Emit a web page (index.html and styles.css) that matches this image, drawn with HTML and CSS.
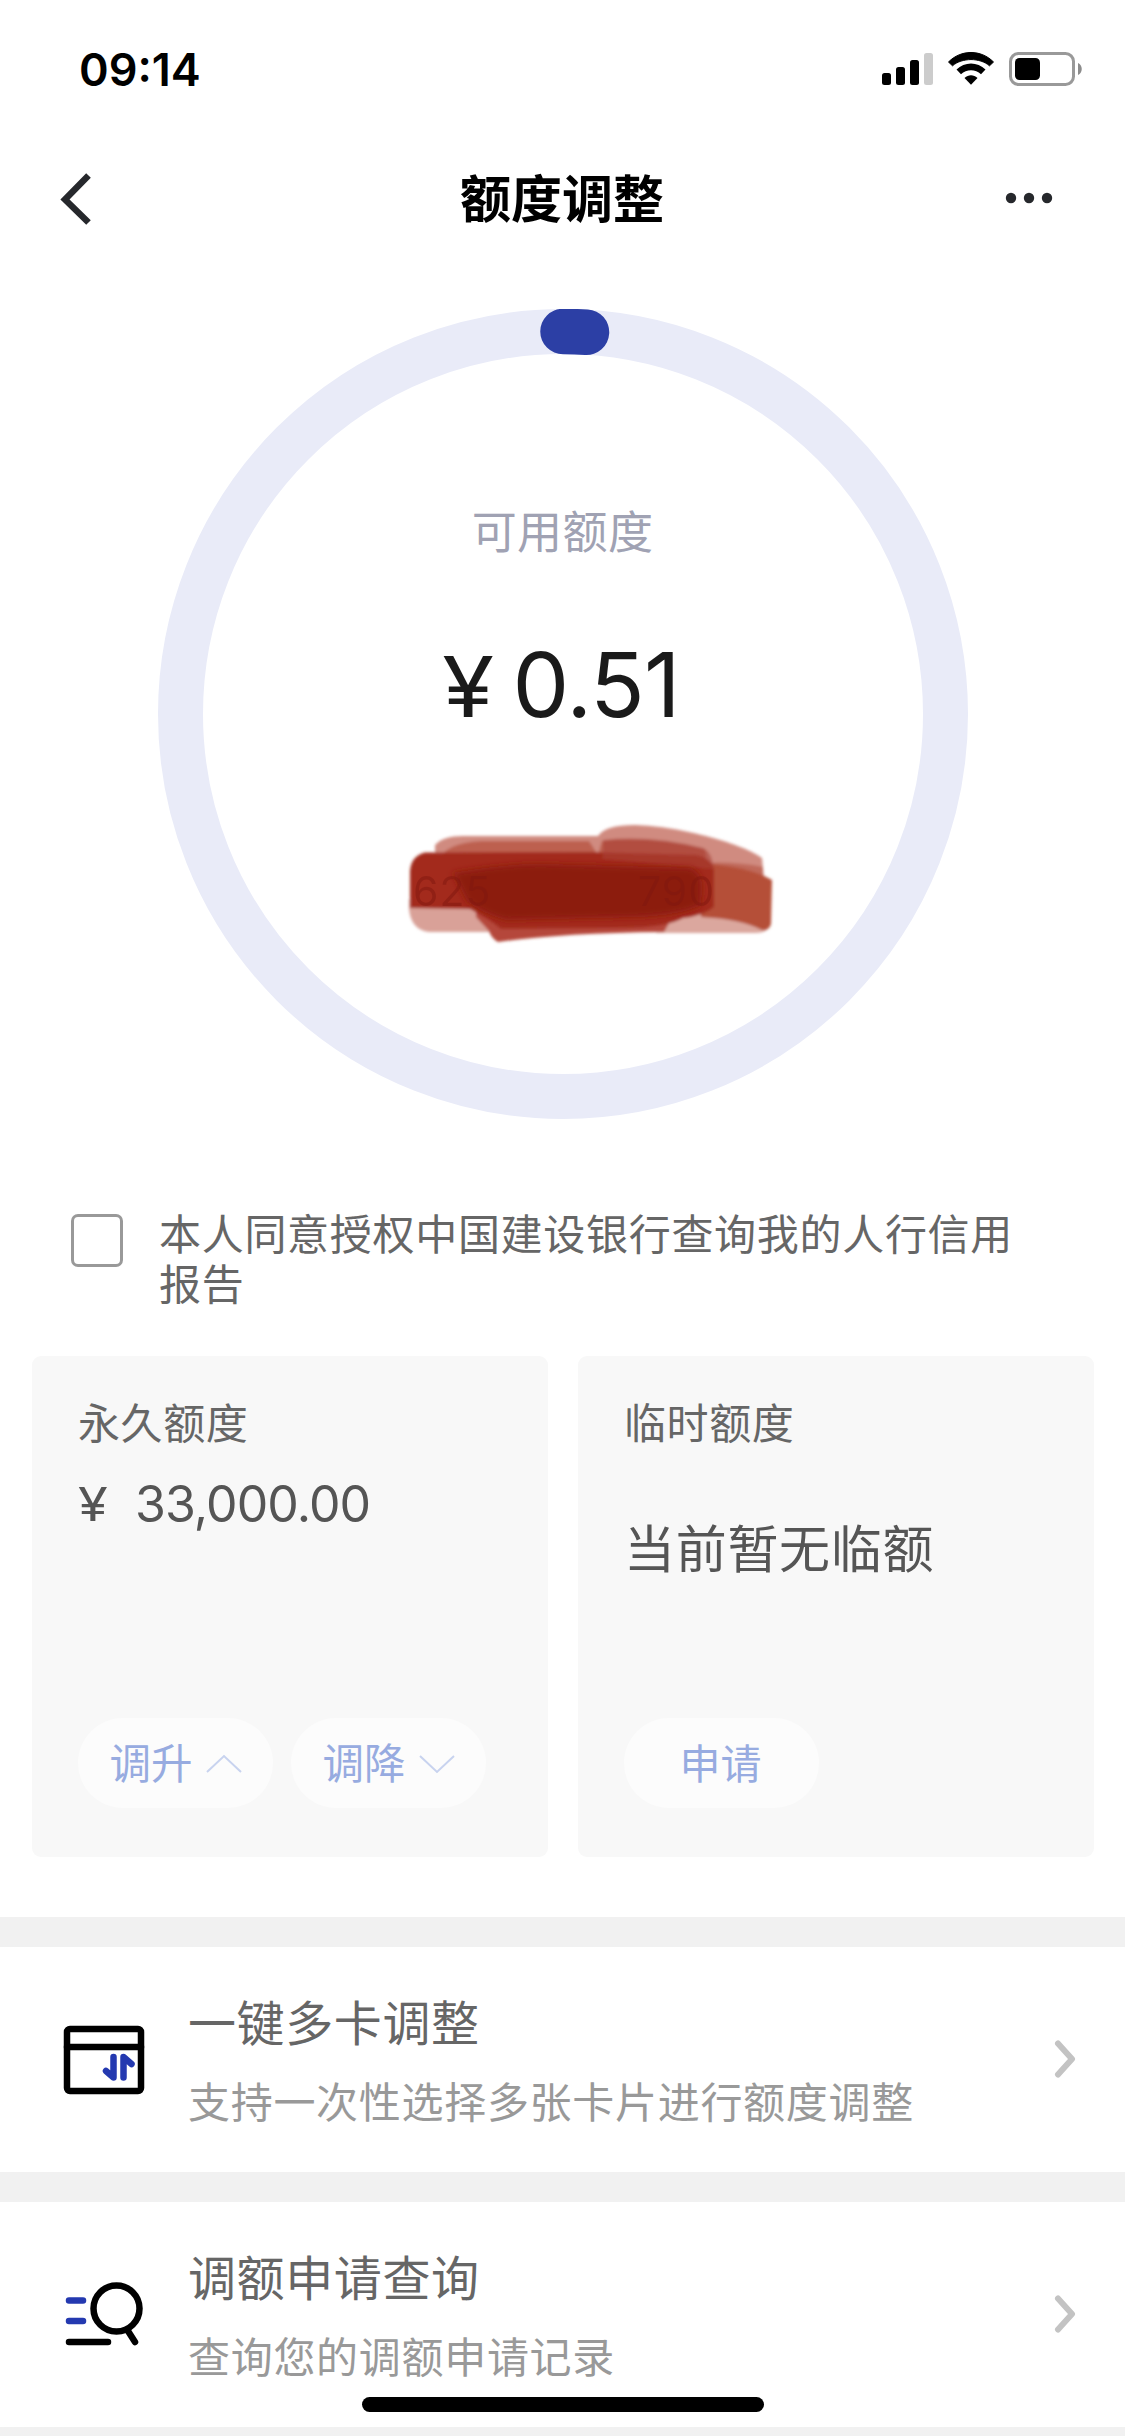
FILE: index.html
```html
<!DOCTYPE html>
<html lang="zh-CN">
<head>
<meta charset="utf-8">
<title>额度调整</title>
<link rel="stylesheet" href="styles.css">
</head>
<body>
<div class="screen">
  <header class="status">
    <span class="clock">09:14</span>
    <svg class="status-icons" width="202" height="36" viewBox="0 0 202 36">
      <rect x="0" y="21" width="9" height="12" rx="2.5"/>
      <rect x="14" y="15" width="9" height="18" rx="2.5"/>
      <rect x="28" y="8" width="9" height="25" rx="2.5"/>
      <rect x="42" y="1" width="9" height="32" rx="2.5" fill="#ccc"/>
      <path d="M66.5 10 L70.5 13.8 C80 5.5 98 5.5 107.500 13.800 L111.500 10 C99 -2.700 79 -2.700 66.500 10Z" stroke="#000" stroke-width="1" stroke-linejoin="round"/>
      <path d="M74.500 17.500 L79 22.200 C84.500 17 93.500 17 99 22.200 L103.500 17.500 C95.500 9.500 82.500 9.500 74.500 17.500Z"/>
      <path d="M82.500 26 L89 32.800 L95.500 26 C91.500 22.300 86.500 22.300 82.500 26Z"/>
      <rect x="128.500" y="1.500" width="63" height="31" rx="8" fill="#fff" stroke="#999" stroke-width="3"/>
      <rect x="133" y="6" width="25" height="22" rx="4.500"/>
      <path d="M196 11 C201 13 201 21 196 23Z" fill="#8c8c8c"/>
    </svg>
  </header>

  <nav class="nav">
    <svg class="back" width="34" height="54" viewBox="0 0 34 54"><path d="M31.500 3.500 L8 27.500 L31.500 50.500"/></svg>
    <h1 class="nav-title">额度调整</h1>
    <svg class="more" width="48" height="12" viewBox="0 0 48 12"><circle cx="6" cy="6" r="5.200"/><circle cx="24" cy="6" r="5.200"/><circle cx="42" cy="6" r="5.200"/></svg>
  </nav>

  <section class="gauge">
    <svg class="ring" width="810" height="810" viewBox="0 0 810 810">
      <circle class="ring-track" cx="405" cy="405" r="382.500"/>
      <path class="ring-value" d="M405 22.500 A382.500 382.500 0 0 1 428.500 23.200"/>
    </svg>
    <div class="gauge-text">
      <p class="gauge-label">可用额度</p>
      <p class="gauge-amount"><span class="yen">¥</span><span>0.51</span></p>
      <svg class="scribble" width="380" height="130" viewBox="0 0 380 130">
        <defs>
          <filter id="soft" x="-10%" y="-20%" width="120%" height="140%"><feGaussianBlur stdDeviation="1.800"/></filter>
          <filter id="softer" x="-10%" y="-20%" width="120%" height="140%"><feGaussianBlur stdDeviation="3"/></filter>
        </defs>
        <g filter="url(#soft)">
          <path fill="#d9a198" d="M8 78 L95 84 L95 111 L28 111 Q10 109 8 88Z"/>
          <path fill="#dba79e" d="M258 92 L370 92 L368 105 Q366 112 355 112 L255 112Z"/>
          <path fill="#d08b80" d="M34 40 L34 24 Q42 15 62 15 L197 15 Q204 4 234 4 C280 5 345 24 361 37 L363 58 L300 62Z"/>
          <path fill="#bd604f" d="M37 40 Q44 22 80 20 L188 20 L197 34 L201 20 Q250 15 304 28 L308 60 L100 60Z"/>
          <path fill="#c0695a" d="M300 42 Q335 40 362 46 L362 58 L300 62Z"/>
          <path fill="#b54f38" d="M300 42 Q350 46 371 59 L370 103 Q368 110 361 109 Q340 98 300 96Z"/>
          <path fill="#b5473a" d="M75 85 L275 90 L263 111 Q160 112 97 121 Q90 117 88 110 L75 96Z"/>
          <path fill="#a3291d" d="M9 50 Q10 35 24 31.500 L190 31 L296 34 Q312 38 313 50 L313 86 Q302 95 282 97 Q265 107 220 107 L100 108 Q88 98 70 88 L9 87Z"/>
          <path fill="#aa4137" opacity=".6" d="M202 19 Q250 14 302 27 Q312 32 312 48 L202 38Z"/>
        </g>
        <g filter="url(#softer)">
          <path fill="#8c1c11" d="M52 52 Q100 43 140 43 L290 47 Q301 52 301 66 L300 84 Q280 94 235 96 L105 99 Q80 92 66 80Z"/>
        </g>
        <text class="masked" x="12" y="85">625</text>
        <text class="masked" x="237" y="85">790</text>
      </svg>
    </div>
  </section>

  <label class="consent">
    <span class="checkbox"></span>
    <span class="consent-text">本人同意授权中国建设银行查询我的人行信用报告</span>
  </label>

  <section class="cards">
    <article class="card">
      <h2 class="card-title">永久额度</h2>
      <p class="card-amount"><span class="card-yen">¥</span>33,000.00</p>
      <div class="actions">
        <span class="pill">调升<svg width="36" height="20" viewBox="0 0 36 20"><path d="M1 18 L18 2 L35 18"/></svg></span>
        <span class="pill">调降<svg width="36" height="20" viewBox="0 0 36 20"><path d="M1 2 L18 18 L35 2"/></svg></span>
      </div>
    </article>
    <article class="card">
      <h2 class="card-title">临时额度</h2>
      <p class="card-message">当前暂无临额</p>
      <div class="actions"><span class="pill pill-plain">申请</span></div>
    </article>
  </section>

  <section class="menu">
    <div class="item">
      <svg class="item-icon" width="82" height="70" viewBox="0 0 82 70">
        <rect x="4" y="4" width="74" height="62" rx="3"/>
        <path d="M4 22 H78"/>
        <path class="blue" d="M50.500 32 V52.500 L43 46 M60.500 52.500 V32 L68.500 39"/>
      </svg>
      <div class="item-text"><h3>一键多卡调整</h3><p>支持一次性选择多张卡片进行额度调整</p></div>
      <svg class="chevron" width="24" height="38" viewBox="0 0 24 38"><path d="M4 3.500 L18 19 L4 34.500"/></svg>
    </div>
    <div class="item">
      <svg class="item-icon" width="82" height="70" viewBox="0 0 82 70">
        <circle cx="53.500" cy="28.500" r="23"/>
        <path d="M65 51 L72 62 M6 62 H45"/>
        <path class="blue" d="M6 20.500 H20 M6 41 H20"/>
      </svg>
      <div class="item-text"><h3>调额申请查询</h3><p>查询您的调额申请记录</p></div>
      <svg class="chevron" width="24" height="38" viewBox="0 0 24 38"><path d="M4 3.500 L18 19 L4 34.500"/></svg>
    </div>
  </section>
  <div class="home-indicator"></div>
</div>
</body>
</html>
```
FILE: styles.css
```css
* { box-sizing: border-box; margin: 0; padding: 0; }

body {
  width: 1125px;
  background: #fff;
  font-family: Inter, "Noto Sans CJK SC", sans-serif;
  font-weight: 400;
}

svg { display: block; flex: none; }

.screen {
  position: relative;
  width: 1125px;
  height: 2436px;
  overflow: hidden;
}

.status {
  display: flex;
  justify-content: space-between;
  height: 132px;
  padding: 52px 41px 0 79px;
}

.clock {
  font-size: 45px;
  font-weight: 600;
  line-height: 35px;
}

.nav {
  display: grid;
  grid-template-columns: 1fr auto 1fr;
  align-items: center;
  height: 134px;
  padding: 0 72px 0 57px;
}

.back path { fill: none; stroke: #26282c; stroke-width: 6.5; }
.more { justify-self: end; margin-top: -2px; }
.more circle { fill: #26282c; }

.nav-title {
  padding: 2px 0 0 14px;
  font-size: 51px;
  font-weight: 600;
  line-height: 72px;
}

.gauge {
  display: grid;
  justify-content: center;
  padding-top: 43px;
}

.ring, .gauge-text { grid-area: 1 / 1; }
.ring-track { fill: none; stroke: #e9ebf8; stroke-width: 45; }
.ring-value { fill: none; stroke: #2c3fa5; stroke-width: 45.5; stroke-linecap: round; }

.gauge-text {
  display: flex;
  flex-direction: column;
  align-items: center;
  padding-top: 192px;
}

.gauge-label {
  font-size: 45px;
  letter-spacing: .4px;
  line-height: 64px;
  color: #a0a2b3;
}

.gauge-amount {
  display: flex;
  align-items: baseline;
  gap: 22px;
  margin-top: 70px;
  font-size: 90px;
  letter-spacing: -.8px;
  line-height: 100px;
  color: #1a1a1a;
}

.yen {
  font-size: 84px;
  transform: scaleX(1.12);
}

.scribble { margin: 84px -56px 0 0; }

.masked {
  font-size: 41px;
  letter-spacing: 1px;
  fill: #80170f;
  opacity: .5;
}

.consent {
  display: flex;
  gap: 36px;
  height: 237px;
  padding: 91px 90px 0 71px;
}

.checkbox {
  flex: none;
  width: 52px;
  height: 53px;
  margin-top: 4px;
  border: 3px solid #999;
  border-radius: 7px;
}

.consent-text {
  font-size: 42px;
  letter-spacing: .7px;
  line-height: 50px;
  color: #666;
}

.cards {
  display: grid;
  grid-template-columns: 1fr 1fr;
  gap: 30px;
  height: 561px;
  padding: 0 31px 60px 32px;
}

.card {
  display: flex;
  flex-direction: column;
  padding: 38px 46px 49px;
  border-radius: 9px;
  background: #f8f8f8;
}

.card-title {
  font-size: 42px;
  font-weight: 400;
  letter-spacing: .6px;
  line-height: 60px;
  color: #666;
}

.card-amount {
  display: flex;
  gap: 32px;
  margin-top: 18px;
  font-size: 50px;
  letter-spacing: -.9px;
  line-height: 64px;
  color: #555;
}

.card-yen {
  font-size: 47px;
  transform: scaleX(1.15);
  transform-origin: left;
}

.card-message {
  margin-top: 60px;
  font-size: 51px;
  letter-spacing: .7px;
  line-height: 72px;
  color: #555;
}

.actions {
  display: flex;
  gap: 18px;
  margin-top: auto;
}

.pill {
  display: flex;
  align-items: center;
  justify-content: center;
  gap: 13px;
  width: 195px;
  height: 90px;
  padding-top: 2px;
  border-radius: 45px;
  background: #fcfcfc;
  font-size: 41.500px;
  line-height: 60px;
  color: #97abe0;
}

.pill-plain { padding-right: 2px; font-size: 41px; }
.pill path { fill: none; stroke: #c8d3ef; stroke-width: 2; }

.item {
  display: flex;
  height: 255px;
  padding: 0 47px 0 63px;
  border-top: 30px solid #f1f1f1;
}

.menu { border-bottom: 9px solid #f1f1f1; }

.item-icon { margin-top: 78px; }
.item-icon * { fill: none; stroke: #000; stroke-width: 6.5; stroke-linecap: round; stroke-linejoin: round; }
.item-icon .blue { stroke: #2439b0; }

.item-text { margin-left: 43px; }

.item-text h3 {
  margin-top: 42px;
  font-size: 48px;
  font-weight: 400;
  letter-spacing: .6px;
  line-height: 70px;
  color: #666;
}

.item-text p {
  margin-top: 14px;
  font-size: 42px;
  letter-spacing: .7px;
  line-height: 60px;
  color: #999;
}

.chevron { margin: 93px 0 0 auto; }
.chevron path { fill: none; stroke: #c3c3c3; stroke-width: 6; stroke-linecap: round; stroke-linejoin: round; }

/* System gesture bar floating above the page */
.home-indicator {
  position: absolute;
  left: 362px;
  bottom: 24px;
  width: 402px;
  height: 15px;
  border-radius: 8px;
  background: #000;
}
```
